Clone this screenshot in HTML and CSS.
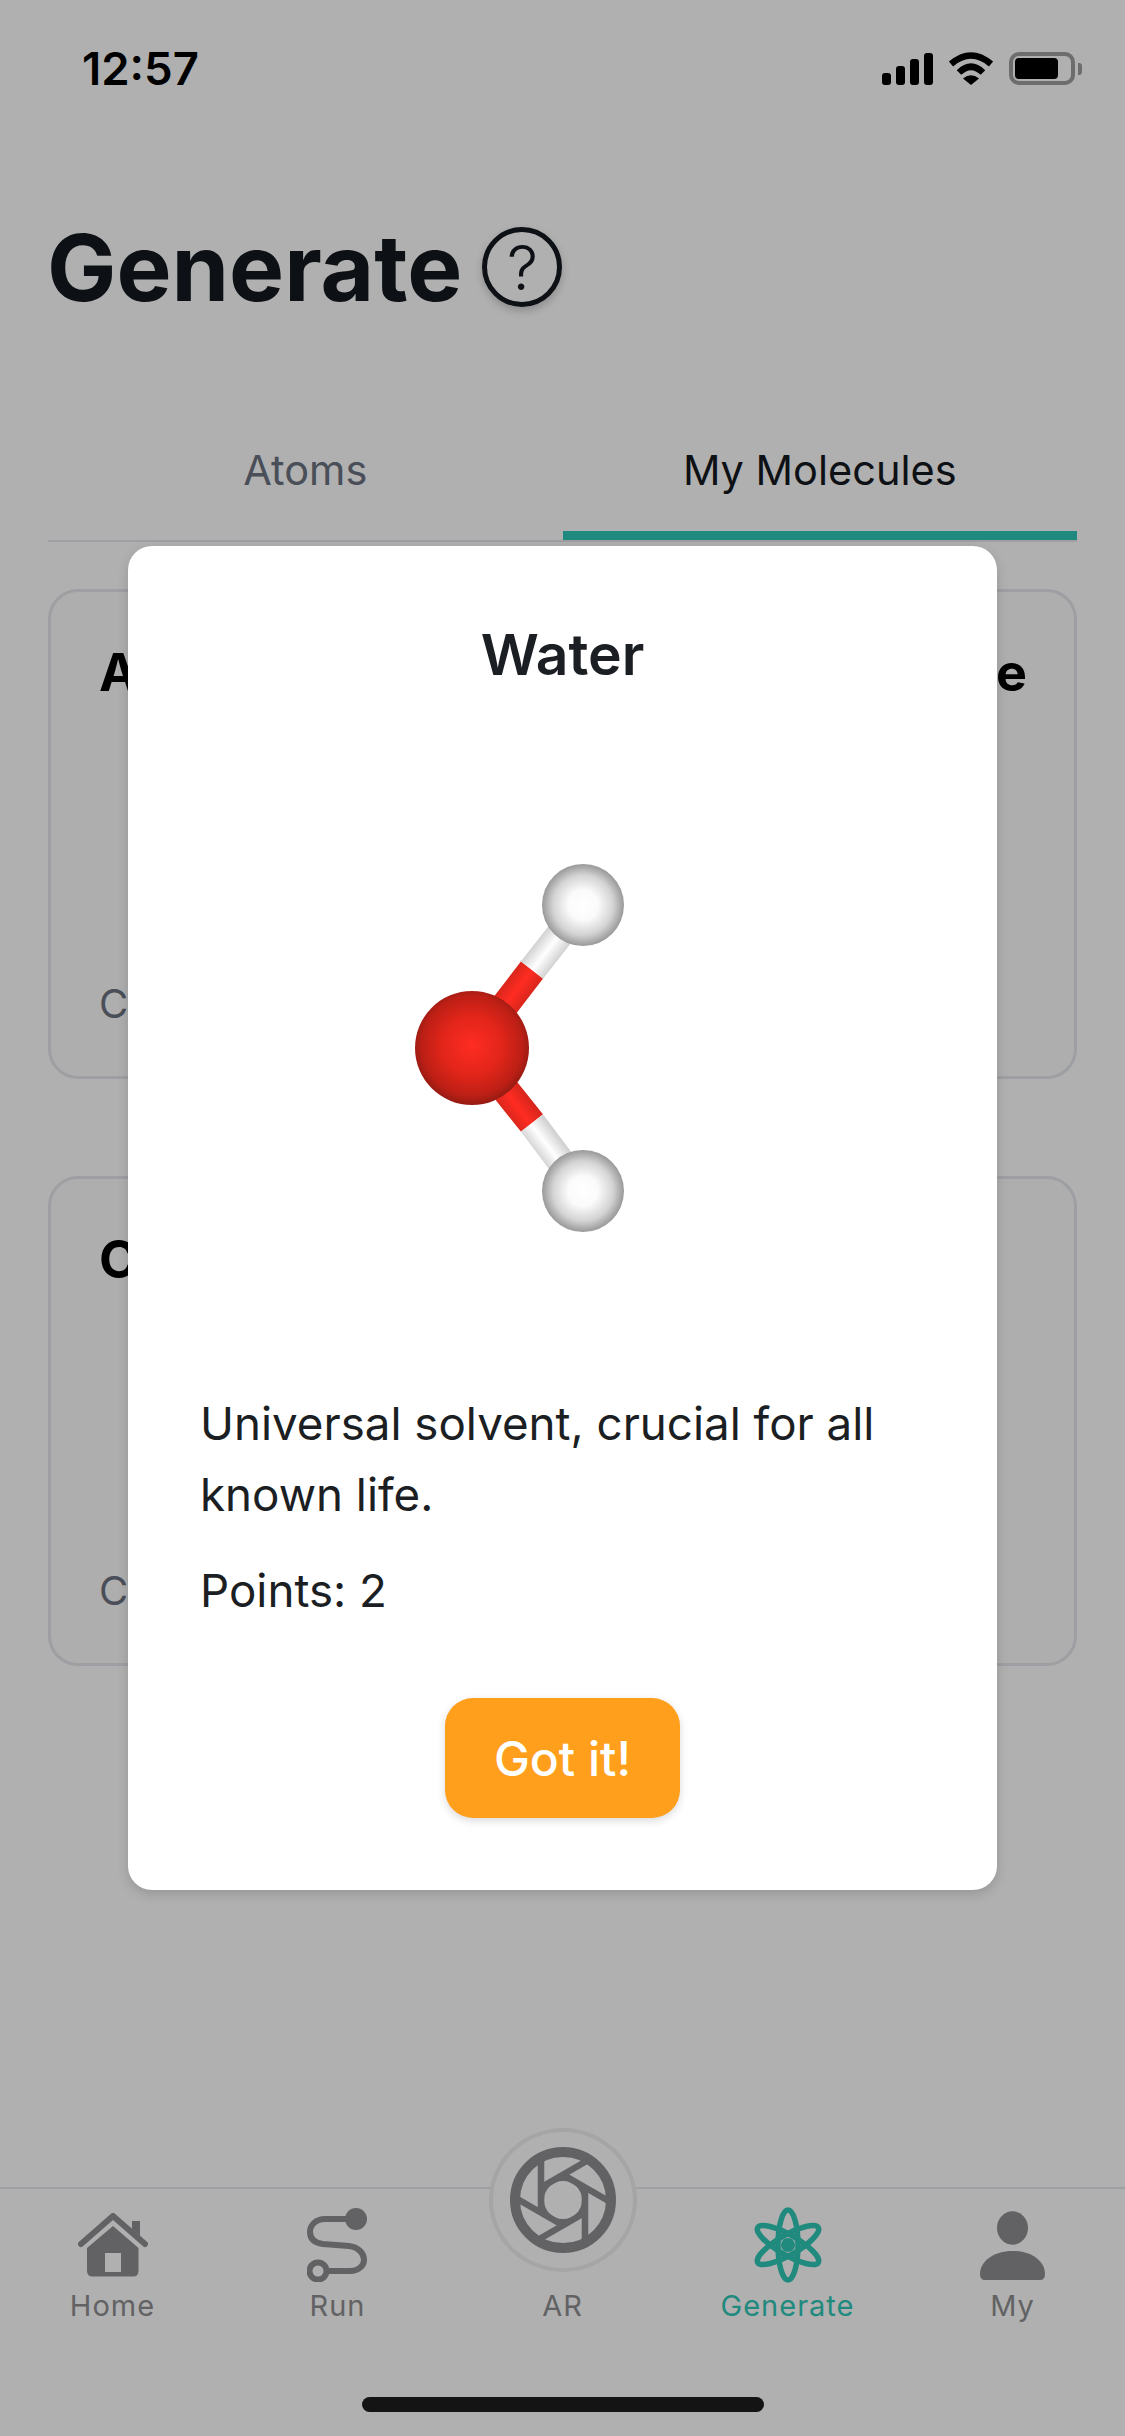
FILE: index.html
```html
<!DOCTYPE html>
<html lang="en">
<head>
  <meta charset="UTF-8">
  <meta name="viewport" content="width=device-width, initial-scale=1.0">
  <title>Generate</title>
  <link rel="stylesheet" href="styles.css">
</head>
<body>

  <div class="screen">
    <!-- status bar -->
    <div class="status-bar">
      <span class="time">12:57</span>
      <div class="status-icons">
        <div class="signal">
          <i class="bar bar-1"></i><i class="bar bar-2"></i><i class="bar bar-3"></i><i class="bar bar-4"></i>
        </div>
        <svg class="wifi" viewBox="0 0 46 33" width="46" height="33">
          <path d="M3 12 Q23 -5 43 12" fill="none" stroke="#000" stroke-width="6.5"/>
          <path d="M11 20.500 Q23 9 35 20.500" fill="none" stroke="#000" stroke-width="6.5"/>
          <path d="M15 26.500 Q23 20 31 26.500 L23 33 Z" fill="#000"/>
        </svg>
        <div class="battery"><i class="battery-level"></i></div>
        <i class="battery-cap"></i>
      </div>
    </div>

    <div class="header">
      <h1>Generate</h1>
      <span class="help">?</span>
    </div>

    <div class="tabs">
      <div class="tab">Atoms</div>
      <div class="tab tab-active">My Molecules</div>
    </div>

    <!-- molecule cards, mostly behind the dialog -->
    <div class="cards">
      <div class="card">
        <div class="card-title"><span>A</span><span>e</span></div>
        <div class="card-note">C</div>
      </div>
      <div class="card">
        <div class="card-title"><span>C</span></div>
        <div class="card-note">C</div>
      </div>
    </div>

    <div class="nav">
      <div class="nav-item">
        <div class="nav-icon">
          <svg viewBox="0 0 70 64" width="70" height="64">
            <path d="M3 31 L35 3 L67 31" fill="none" stroke="#8e8f91" stroke-width="6" stroke-linecap="round" stroke-linejoin="round"/>
            <path d="M54 8 H62 V23 L54 16 Z" fill="#8e8f91"/>
            <path fill-rule="evenodd" d="M35 13 L60.500 35 V58 Q60.500 63.500 55 63.500 H15 Q9 63.500 9 58 V35 Z M27 40 V59 H43 V40 Z" fill="#8e8f91"/>
          </svg>
        </div>
        <span class="nav-label">Home</span>
      </div>
      <div class="nav-item">
        <div class="nav-icon">
          <svg viewBox="0 0 61 74" width="61" height="74">
            <path d="M49 11 H18 C9 11 3 17 3 24 C3 31 8 35 16 36 L42 38 C51 39 57 45 57 52 C57 58 51 63 43 63 H19" fill="none" stroke="#8e8f91" stroke-width="6"/>
            <circle cx="49" cy="11" r="11" fill="#8e8f91"/>
            <circle cx="11" cy="63" r="8.500" fill="none" stroke="#8e8f91" stroke-width="6"/>
          </svg>
        </div>
        <span class="nav-label">Run</span>
      </div>
      <div class="nav-item">
        <div class="ar-button">
          <svg viewBox="-55 -55 110 110" width="110" height="110">
            <circle r="48" fill="none" stroke="#8e8f91" stroke-width="10"/>
            <circle r="21.500" fill="none" stroke="#8e8f91" stroke-width="5"/>
            <g stroke="#8e8f91" stroke-width="6.500">
              <line x1="-22" y1="10" x2="-22" y2="-44"/>
              <line x1="-22" y1="10" x2="-22" y2="-44" transform="rotate(60)"/>
              <line x1="-22" y1="10" x2="-22" y2="-44" transform="rotate(120)"/>
              <line x1="-22" y1="10" x2="-22" y2="-44" transform="rotate(180)"/>
              <line x1="-22" y1="10" x2="-22" y2="-44" transform="rotate(240)"/>
              <line x1="-22" y1="10" x2="-22" y2="-44" transform="rotate(300)"/>
            </g>
          </svg>
        </div>
        <div class="nav-icon"></div>
        <span class="nav-label">AR</span>
      </div>
      <div class="nav-item nav-item-active">
        <div class="nav-icon">
          <svg viewBox="-35 -38 70 76" width="70" height="76">
            <g fill="none" stroke="#2dc8b6" stroke-width="5.500">
              <ellipse rx="10" ry="35"/>
              <ellipse rx="10" ry="35" transform="rotate(60)"/>
              <ellipse rx="10" ry="35" transform="rotate(-60)"/>
            </g>
            <circle r="7" fill="#2dc8b6"/>
          </svg>
        </div>
        <span class="nav-label">Generate</span>
      </div>
      <div class="nav-item">
        <div class="nav-icon">
          <svg viewBox="0 0 65 69" width="65" height="69">
            <ellipse cx="32.500" cy="17" rx="15.500" ry="16.700" fill="#8e8f91"/>
            <path d="M0 63 C0 50 14 40 32.500 40 C51 40 65 50 65 63 Q65 69 60 69 H5 Q0 69 0 63 Z" fill="#8e8f91"/>
          </svg>
        </div>
        <span class="nav-label">My</span>
      </div>
    </div>
    <div class="home-indicator"></div>
  </div>

  <!-- dialog -->
  <div class="overlay">
    <div class="modal">
      <h2>Water</h2>
      <svg class="molecule" viewBox="0 0 869 560" width="869" height="560">
        <defs>
          <radialGradient id="oxygen" cx="50%" cy="48%" r="52%">
            <stop offset="0" stop-color="#ff2c22"/>
            <stop offset="0.5" stop-color="#e2251a"/>
            <stop offset="0.85" stop-color="#bc1f15"/>
            <stop offset="1" stop-color="#941b12"/>
          </radialGradient>
          <radialGradient id="hydrogen" cx="50%" cy="50%" r="52%">
            <stop offset="0" stop-color="#ffffff"/>
            <stop offset="0.35" stop-color="#fbfbfb"/>
            <stop offset="0.7" stop-color="#d4d4d4"/>
            <stop offset="0.92" stop-color="#a2a2a2"/>
            <stop offset="1" stop-color="#929292"/>
          </radialGradient>
          <linearGradient id="bond-red-top" gradientUnits="userSpaceOnUse" x1="389" y1="207" x2="411" y2="224">
            <stop offset="0" stop-color="#d9261c"/>
            <stop offset="0.5" stop-color="#ff2c22"/>
            <stop offset="1" stop-color="#d9261c"/>
          </linearGradient>
          <linearGradient id="bond-white-top" gradientUnits="userSpaceOnUse" x1="389" y1="207" x2="411" y2="224">
            <stop offset="0" stop-color="#d2d2d2"/>
            <stop offset="0.5" stop-color="#ffffff"/>
            <stop offset="1" stop-color="#d2d2d2"/>
          </linearGradient>
          <linearGradient id="bond-red-bottom" gradientUnits="userSpaceOnUse" x1="389" y1="369" x2="411" y2="352">
            <stop offset="0" stop-color="#d9261c"/>
            <stop offset="0.5" stop-color="#ff2c22"/>
            <stop offset="1" stop-color="#d9261c"/>
          </linearGradient>
          <linearGradient id="bond-white-bottom" gradientUnits="userSpaceOnUse" x1="389" y1="369" x2="411" y2="352">
            <stop offset="0" stop-color="#d2d2d2"/>
            <stop offset="0.5" stop-color="#ffffff"/>
            <stop offset="1" stop-color="#d2d2d2"/>
          </linearGradient>
        </defs>
        <line x1="344" y1="288" x2="404" y2="210" stroke="url(#bond-red-top)" stroke-width="28"/>
        <line x1="404" y1="210" x2="455" y2="145" stroke="url(#bond-white-top)" stroke-width="28"/>
        <line x1="344" y1="288" x2="404" y2="363" stroke="url(#bond-red-bottom)" stroke-width="28"/>
        <line x1="404" y1="363" x2="455" y2="431" stroke="url(#bond-white-bottom)" stroke-width="28"/>
        <circle cx="455" cy="145" r="41" fill="url(#hydrogen)"/>
        <circle cx="455" cy="431" r="41" fill="url(#hydrogen)"/>
        <circle cx="344" cy="288" r="57" fill="url(#oxygen)"/>
      </svg>
      <p class="description">Universal solvent, crucial for all known life.</p>
      <p class="points">Points: 2</p>
      <button class="got-it">Got it!</button>
    </div>
  </div>

</body>
</html>
```

FILE: styles.css
```css
html, body {
  margin: 0;
  padding: 0;
}
body {
  font-family: Inter, "Liberation Sans", sans-serif;
  background-color: #fff;
}
.screen {
  display: flex;
  flex-direction: column;
  height: 2436px;
  color: #13181d;
}
.status-bar {
  display: flex;
  justify-content: space-between;
  align-items: center;
  height: 33px;
  padding: 52px 43px 0 82px;
}
.time {
  font-size: 45.5px;
  font-weight: 600;
  color: #000;
}
.status-icons {
  display: flex;
  align-items: center;
}
.signal {
  display: flex;
  align-items: flex-end;
  gap: 5px;
  height: 32px;
  margin-right: 15px;
}
.bar {
  display: block;
  width: 9px;
  background: #000;
  border-radius: 3px;
}
.bar-1 { height: 12px; }
.bar-2 { height: 19px; }
.bar-3 { height: 26px; }
.bar-4 { height: 32px; }
.wifi {
  margin-right: 15px;
}
.battery {
  box-sizing: border-box;
  width: 66px;
  height: 33px;
  padding: 2px;
  border: 4px solid #9f9f9f;
  border-radius: 10px;
}
.battery-level {
  display: block;
  width: 43px;
  height: 100%;
  background: #000;
  border-radius: 4px;
}
.battery-cap {
  display: block;
  width: 4px;
  height: 12px;
  margin-left: 3px;
  background: #9f9f9f;
  border-radius: 0 3px 3px 0;
}
.header {
  display: flex;
  align-items: center;
  gap: 20px;
  padding: 142px 47px 0;
}
.header h1 {
  margin: 0;
  font-size: 92.5px;
  font-weight: 700;
  line-height: 80px;
}
.help {
  box-sizing: border-box;
  display: flex;
  justify-content: center;
  align-items: center;
  width: 80px;
  height: 80px;
  font-size: 62px;
  font-weight: 300;
  border: 5px solid #13181d;
  border-radius: 50%;
  box-shadow: 0 4px 8px rgba(0, 0, 0, 0.2);
}
.tabs {
  display: flex;
  margin: 126px 48px 0;
  border-bottom: 2px solid #e5e7eb;
}
.tab {
  flex: 1;
  height: 107px;
  font-size: 41.5px;
  line-height: 74px;
  text-align: center;
  color: #6b7280;
}
.tab-active {
  height: 98px;
  color: #13181d;
  border-bottom: 9px solid #2dc8b6;
}
.cards {
  display: flex;
  flex-direction: column;
  gap: 97px;
  margin: 47px 48px 0;
}
.card {
  box-sizing: border-box;
  display: flex;
  flex-direction: column;
  justify-content: space-between;
  height: 490px;
  padding: 49px 47px 48px 48px;
  background: #fcfcfc;
  border: 3px solid #e5e7eb;
  border-radius: 30px;
}
.card-title {
  display: flex;
  justify-content: space-between;
  font-size: 52px;
  font-weight: 700;
  color: #000;
}
.card-note {
  font-size: 40px;
  color: #6b7280;
}
.nav {
  display: grid;
  grid-template-columns: repeat(5, 225px);
  margin-top: auto;
  padding-top: 18px;
  height: 229px;
  border-top: 2px solid #e5e7eb;
}
.nav-item {
  position: relative;
  display: flex;
  flex-direction: column;
  align-items: center;
}
.nav-icon {
  display: flex;
  justify-content: center;
  align-items: center;
  height: 76px;
}
.nav-label {
  margin-top: 5px;
  font-size: 29px;
  letter-spacing: 1px;
  color: #8e8f91;
}
.nav-item-active .nav-label {
  color: #2dc8b6;
}
.ar-button {
  box-sizing: border-box;
  position: absolute;
  top: -79px;
  left: 39px;
  display: flex;
  justify-content: center;
  align-items: center;
  width: 148px;
  height: 144px;
  background: #fff;
  border: 4px solid #efefef;
  border-radius: 50%;
}
.home-indicator {
  position: absolute;
  top: 2397px;
  left: 362px;
  width: 402px;
  height: 15px;
  background: #1d1d1d;
  border-radius: 8px;
}
.overlay {
  position: absolute;
  top: 0;
  left: 0;
  display: flex;
  justify-content: center;
  align-items: center;
  width: 1125px;
  height: 2436px;
  background: rgba(0, 0, 0, 0.31);
}
.modal {
  box-sizing: border-box;
  display: flex;
  flex-direction: column;
  width: 869px;
  height: 1344px;
  background: #fff;
  border-radius: 24px;
  box-shadow: 0 4px 12px rgba(0, 0, 0, 0.15);
  color: #1b1e22;
}
.modal h2 {
  margin: 0;
  padding-top: 74px;
  font-size: 57px;
  font-weight: 600;
  line-height: 70px;
  text-align: center;
}
.molecule {
  display: block;
  margin-top: 70px;
}
.description {
  margin: 68px 72px 0;
  font-size: 45.7px;
  line-height: 71px;
}
.points {
  margin: 25px 72px 0;
  font-size: 45.7px;
  line-height: 71px;
}
.got-it {
  align-self: center;
  width: 235px;
  height: 120px;
  margin-top: 72px;
  padding: 0;
  font-family: Inter, "Liberation Sans", sans-serif;
  font-size: 48px;
  font-weight: 500;
  color: #fff;
  background-color: #ff9f1c;
  border: none;
  border-radius: 28px;
  box-shadow: 0 3px 8px rgba(0, 0, 0, 0.15);
}
```
